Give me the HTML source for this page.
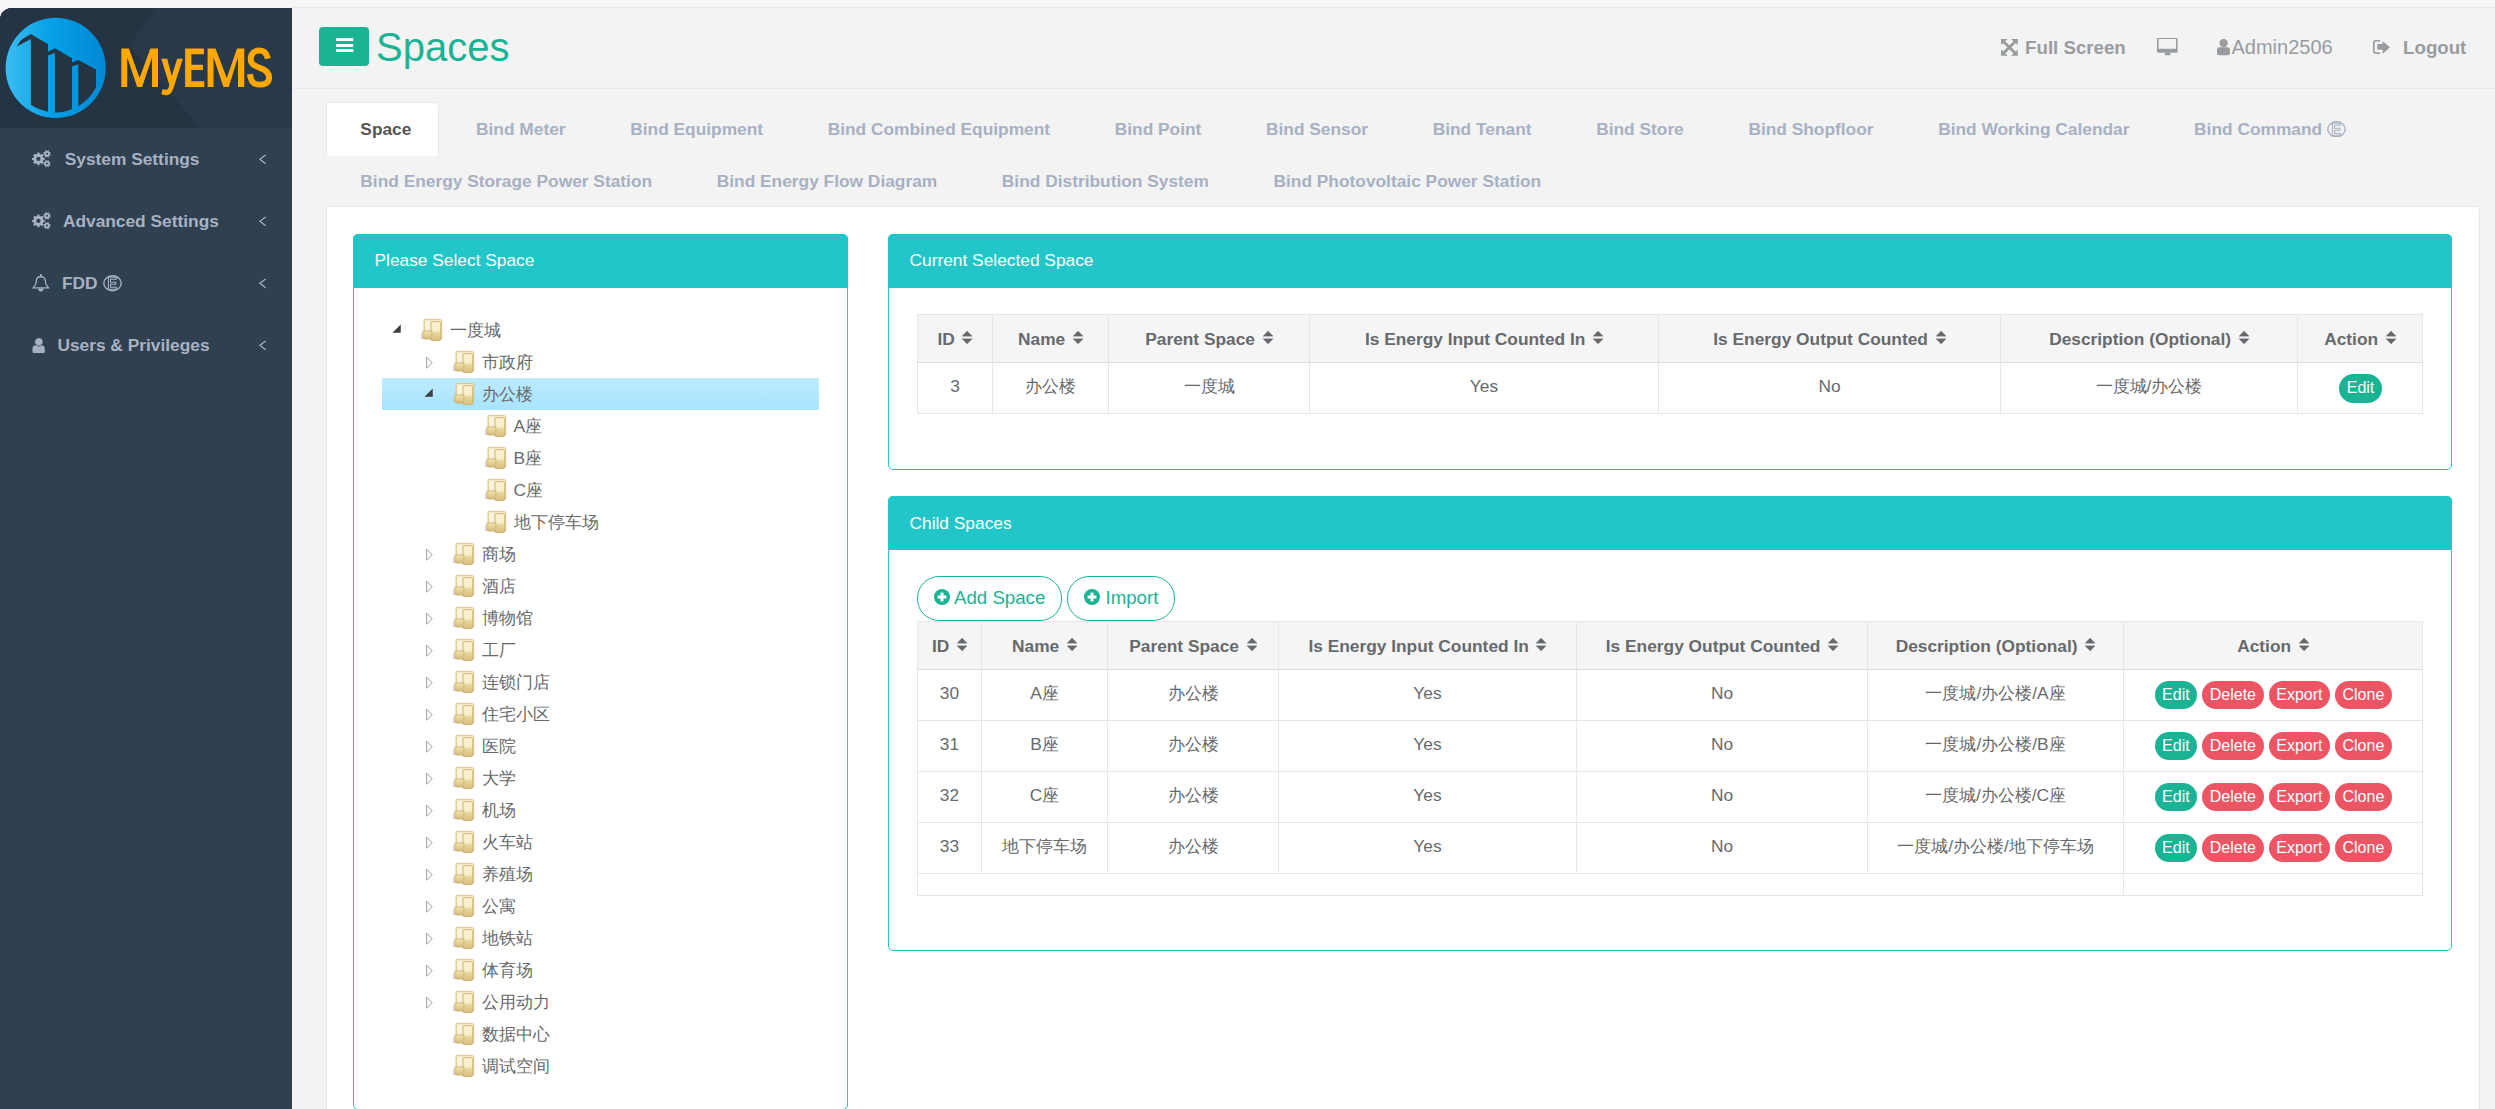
<!DOCTYPE html><html><head><meta charset="utf-8"><title>Spaces</title><style>
*{box-sizing:border-box;margin:0;padding:0}
html,body{width:2495px;height:1109px;overflow:hidden}
body{background:#f6f6f6;font-family:"Liberation Sans",sans-serif;font-size:17.33px;color:#676a6c;position:relative}
.abs{position:absolute}
.txt{position:absolute;white-space:nowrap;line-height:1}
#sidebar{position:absolute;left:0;top:8px;width:292px;height:1101px;background:#2f4050;border-top-left-radius:12px;overflow:hidden}
#navhead{position:absolute;left:0;top:0;width:292px;height:120px;background:#243443;overflow:hidden}
.menu{position:absolute;left:0;width:292px;color:#a7b1c2;font-weight:bold;font-size:17.33px}
#header{position:absolute;left:292px;top:7px;width:2203px;height:82px;background:#f3f3f4;border-top:1px solid #e7e7e8;border-bottom:1px solid #e7eaec}
#page{position:absolute;left:292px;top:89px;width:2203px;height:1020px;background:#f3f3f4}
.tabs{position:absolute;left:326px;top:102px;width:2152px;display:flex;flex-wrap:wrap}
.tab{display:block;border:1px solid transparent;padding:0 26.67px 0 33.33px;margin-right:2.67px;margin-bottom:-2px;height:54px;line-height:53px;font-weight:bold;color:#a7b1c2;white-space:nowrap;font-size:17.33px}
.tab.active{background:#fff;border-color:#e7eaec;border-bottom-color:#fff;border-radius:4px 4px 0 0;color:#555}
#content{position:absolute;left:326px;top:206px;width:2154px;height:910px;background:#fff;border:1px solid #e7eaec;border-radius:0 3px 0 0}
.panel{position:absolute;border:1px solid #23c6c8;border-radius:5px;background:#fff}
.phead{position:absolute;left:-1px;top:-1px;right:-1px;background:#23c6c8;color:#fff;border-radius:5px 5px 0 0}
table.t{position:absolute;border-collapse:collapse;table-layout:fixed;font-size:17.33px;color:#676a6c}
table.t th,table.t td{border:1px solid #e7e7e7;text-align:center;vertical-align:top;white-space:nowrap;line-height:24.76px;padding:10.67px 0 0 0}
table.t th{background:#f5f5f6;font-weight:bold;padding-top:12.4px;border-bottom-color:#dcdcdc}
.sort{display:inline-block;width:10.2px;height:12.9px;margin-left:7.6px;vertical-align:1.1px}
.btn{display:inline-block;color:#fff;font-size:16px;height:28px;line-height:28px;border-radius:14px;text-align:center;vertical-align:top}
.bg{background:#1ab394}.br{background:#ed5565}
.obtn{position:absolute;border:1px solid #1ab394;color:#1ab394;border-radius:22px;font-size:18.67px;height:44.5px;line-height:42px;white-space:nowrap;background:#fff}
.node{position:absolute;height:32px;line-height:32px;white-space:nowrap}
</style></head><body>
<div id="sidebar">
<div id="navhead">
<svg class="abs" style="left:0;top:0" width="292" height="120"><rect width="292" height="120" fill="#243443"/><polygon points="155,0 292,0 292,120 200,120 130,37" fill="#283949"/><polygon points="0,0 60,0 30,120 0,120" fill="#253646" opacity="0.6"/></svg>
<svg class="abs" style="left:0;top:-8px" width="120" height="130" viewBox="0 0 120 130">
<defs><linearGradient id="lg" x1="0" y1="0" x2="1" y2="0"><stop offset="0" stop-color="#3bbdf1"/><stop offset="0.45" stop-color="#06a0e6"/><stop offset="1" stop-color="#0288d4"/></linearGradient>
<clipPath id="cc"><circle cx="55.7" cy="67.9" r="44.5"/></clipPath></defs>
<circle cx="55.7" cy="67.9" r="50.1" fill="url(#lg)"/>
<g clip-path="url(#cc)" fill="#243443">
<polygon points="30.9,39.1 15.8,47 20.2,40.2 30.9,34.1 48,44.2 48,125 30.9,125"/>
<polygon points="48,51.8 54.9,48.2 72,58.3 72,125 54.9,125 54.9,52.8 48,55.6"/>
<polygon points="72,62.5 78.3,60 96,69.4 96,125 78.3,125 78.3,64.4 72,66.3"/>
</g></svg>
<svg class="abs" style="left:115px;top:32px" width="165" height="60" viewBox="0 0 2495 907"><g fill="#ffa800">
<polygon points="95,130 210,130 372,575 535,130 650,130 650,710 560,710 560,260 410,710 335,710 185,260 185,710 95,710"/>
<path d="M700 285 L790 285 L858 548 L940 285 L1025 285 L880 740 Q840 835 775 835 Q735 835 700 815 L720 742 Q750 755 775 752 Q805 748 822 680 Z"/>
<polygon points="1060,130 1345,130 1345,215 1155,215 1155,375 1330,375 1330,455 1155,455 1155,625 1350,625 1350,710 1060,710"/>
<polygon points="1400,130 1520,130 1690,575 1845,130 1955,130 1955,710 1860,710 1860,260 1720,710 1640,710 1490,260 1490,710 1400,710"/>
</g><path d="M2312 282 C2292 190 2245 160 2185 160 C2110 160 2052 200 2052 290 C2055 370 2120 395 2190 420 C2270 445 2330 480 2330 570 C2330 650 2260 675 2185 675 C2100 675 2052 630 2040 515" fill="none" stroke="#ffa800" stroke-width="90"/></svg>
</div>
<div class="txt" style="left:64.7px;top:143.2px;color:#a7b1c2;font-weight:bold;font-size:17.33px">System Settings</div>
<svg class="abs" style="left:32px;top:142px" width="20" height="18" viewBox="0 0 20 18"><path d="M11.24 7.66 L12.72 7.90 L12.72 9.90 L11.24 10.14 L10.70 11.45 L11.58 12.66 L10.16 14.08 L8.95 13.20 L7.64 13.74 L7.40 15.22 L5.40 15.22 L5.16 13.74 L3.85 13.20 L2.64 14.08 L1.22 12.66 L2.10 11.45 L1.56 10.14 L0.08 9.90 L0.08 7.90 L1.56 7.66 L2.10 6.35 L1.22 5.14 L2.64 3.72 L3.85 4.60 L5.16 4.06 L5.40 2.58 L7.40 2.58 L7.64 4.06 L8.95 4.60 L10.16 3.72 L11.58 5.14 L10.70 6.35ZM8.55 8.90A2.15 2.15 0 1 0 4.25 8.90A2.15 2.15 0 1 0 8.55 8.90ZM17.86 4.30 L18.78 4.82 L18.36 5.84 L17.35 5.55 L16.70 6.20 L16.99 7.21 L15.97 7.63 L15.45 6.71 L14.55 6.71 L14.03 7.63 L13.01 7.21 L13.30 6.20 L12.65 5.55 L11.64 5.84 L11.22 4.82 L12.14 4.30 L12.14 3.40 L11.22 2.88 L11.64 1.86 L12.65 2.15 L13.30 1.50 L13.01 0.49 L14.03 0.07 L14.55 0.99 L15.45 0.99 L15.97 0.07 L16.99 0.49 L16.70 1.50 L17.35 2.15 L18.36 1.86 L18.78 2.88 L17.86 3.40ZM16.00 3.85A1.0 1.0 0 1 0 14.00 3.85A1.0 1.0 0 1 0 16.00 3.85ZM17.77 14.04 L18.58 14.52 L18.18 15.48 L17.27 15.25 L16.65 15.87 L16.88 16.78 L15.92 17.18 L15.44 16.37 L14.56 16.37 L14.08 17.18 L13.12 16.78 L13.35 15.87 L12.73 15.25 L11.82 15.48 L11.42 14.52 L12.23 14.04 L12.23 13.16 L11.42 12.68 L11.82 11.72 L12.73 11.95 L13.35 11.33 L13.12 10.42 L14.08 10.02 L14.56 10.83 L15.44 10.83 L15.92 10.02 L16.88 10.42 L16.65 11.33 L17.27 11.95 L18.18 11.72 L18.58 12.68 L17.77 13.16ZM16.00 13.60A1.0 1.0 0 1 0 14.00 13.60A1.0 1.0 0 1 0 16.00 13.60Z" fill="#a7b1c2" fill-rule="evenodd"/></svg>
<svg class="abs" style="left:258px;top:145px" width="9" height="13" viewBox="0 0 9 13"><path d="M7.6 2 L1.9 6.35 L7.6 10.7" stroke="#a7b1c2" stroke-width="1.25" fill="none"/></svg>
<div class="txt" style="left:62.9px;top:205.2px;color:#a7b1c2;font-weight:bold;font-size:17.33px">Advanced Settings</div>
<svg class="abs" style="left:32px;top:204px" width="20" height="18" viewBox="0 0 20 18"><path d="M11.24 7.66 L12.72 7.90 L12.72 9.90 L11.24 10.14 L10.70 11.45 L11.58 12.66 L10.16 14.08 L8.95 13.20 L7.64 13.74 L7.40 15.22 L5.40 15.22 L5.16 13.74 L3.85 13.20 L2.64 14.08 L1.22 12.66 L2.10 11.45 L1.56 10.14 L0.08 9.90 L0.08 7.90 L1.56 7.66 L2.10 6.35 L1.22 5.14 L2.64 3.72 L3.85 4.60 L5.16 4.06 L5.40 2.58 L7.40 2.58 L7.64 4.06 L8.95 4.60 L10.16 3.72 L11.58 5.14 L10.70 6.35ZM8.55 8.90A2.15 2.15 0 1 0 4.25 8.90A2.15 2.15 0 1 0 8.55 8.90ZM17.86 4.30 L18.78 4.82 L18.36 5.84 L17.35 5.55 L16.70 6.20 L16.99 7.21 L15.97 7.63 L15.45 6.71 L14.55 6.71 L14.03 7.63 L13.01 7.21 L13.30 6.20 L12.65 5.55 L11.64 5.84 L11.22 4.82 L12.14 4.30 L12.14 3.40 L11.22 2.88 L11.64 1.86 L12.65 2.15 L13.30 1.50 L13.01 0.49 L14.03 0.07 L14.55 0.99 L15.45 0.99 L15.97 0.07 L16.99 0.49 L16.70 1.50 L17.35 2.15 L18.36 1.86 L18.78 2.88 L17.86 3.40ZM16.00 3.85A1.0 1.0 0 1 0 14.00 3.85A1.0 1.0 0 1 0 16.00 3.85ZM17.77 14.04 L18.58 14.52 L18.18 15.48 L17.27 15.25 L16.65 15.87 L16.88 16.78 L15.92 17.18 L15.44 16.37 L14.56 16.37 L14.08 17.18 L13.12 16.78 L13.35 15.87 L12.73 15.25 L11.82 15.48 L11.42 14.52 L12.23 14.04 L12.23 13.16 L11.42 12.68 L11.82 11.72 L12.73 11.95 L13.35 11.33 L13.12 10.42 L14.08 10.02 L14.56 10.83 L15.44 10.83 L15.92 10.02 L16.88 10.42 L16.65 11.33 L17.27 11.95 L18.18 11.72 L18.58 12.68 L17.77 13.16ZM16.00 13.60A1.0 1.0 0 1 0 14.00 13.60A1.0 1.0 0 1 0 16.00 13.60Z" fill="#a7b1c2" fill-rule="evenodd"/></svg>
<svg class="abs" style="left:258px;top:207px" width="9" height="13" viewBox="0 0 9 13"><path d="M7.6 2 L1.9 6.35 L7.6 10.7" stroke="#a7b1c2" stroke-width="1.25" fill="none"/></svg>
<div class="txt" style="left:61.9px;top:267.2px;color:#a7b1c2;font-weight:bold;font-size:17.33px">FDD</div>
<svg class="abs" style="left:102.6px;top:267px" width="19" height="16.5" viewBox="0 0 19 16.5"><g fill="none" stroke="#a7b1c2"><ellipse cx="9.5" cy="8.25" rx="8.7" ry="7.5" stroke-width="1.45"/><path d="M5.4 2.3H13.3V4.2H7.5V7.3H12.8V9.2H7.5V12.3H13.3V14.2H5.4Z" stroke-width="1.1"/></g></svg>
<svg class="abs" style="left:32px;top:265px" width="18" height="20" viewBox="0 0 18 20"><g stroke="#a7b1c2" fill="none" stroke-width="1.3"><path d="M1.25 14.95L2.1 13.7C3.5 11.9 4.4 10.3 4.4 8V7.5C4.4 5.1 6.3 3.75 8.85 3.75S13.3 5.1 13.3 7.5V8C13.3 10.3 14.2 11.9 15.6 13.7L16.45 14.95Z"/><path d="M8.85 1.1V3.7" stroke-width="1.9"/></g><path d="M6.2 15.5A2.65 2.9 0 0 0 11.5 15.5Z" fill="#a7b1c2"/></svg>
<svg class="abs" style="left:258px;top:269px" width="9" height="13" viewBox="0 0 9 13"><path d="M7.6 2 L1.9 6.35 L7.6 10.7" stroke="#a7b1c2" stroke-width="1.25" fill="none"/></svg>
<div class="txt" style="left:57.4px;top:329.2px;color:#a7b1c2;font-weight:bold;font-size:17.33px">Users &amp; Privileges</div>
<svg class="abs" style="left:31.5px;top:329px" width="14" height="17" viewBox="0 0 14 17"><path d="M3.9 8.3H9.2A3.6 3.6 0 0 1 12.8 11.9V14.8A1.2 1.2 0 0 1 11.6 16H1.7A1.2 1.2 0 0 1 .5 14.8V11.9A3.6 3.6 0 0 1 3.9 8.3Z" fill="#a7b1c2"/><circle cx="6.85" cy="4.9" r="4.15" fill="#a7b1c2" stroke="#2f4050" stroke-width="0.7"/></svg>
<svg class="abs" style="left:258px;top:331px" width="9" height="13" viewBox="0 0 9 13"><path d="M7.6 2 L1.9 6.35 L7.6 10.7" stroke="#a7b1c2" stroke-width="1.25" fill="none"/></svg>
</div>
<div id="header"></div>
<div id="page"></div>
<div class="abs" style="left:319px;top:27px;width:50px;height:39px;background:#1ab394;border-radius:4px"></div>
<svg class="abs" style="left:335.5px;top:38px" width="18" height="16" viewBox="0 0 18 16"><rect x="0" y="0.1" width="17.3" height="2.9" fill="#fff"/><rect x="0" y="6" width="17.3" height="2.9" fill="#fff"/><rect x="0" y="11.1" width="17.3" height="2.9" fill="#fff"/></svg>
<div class="txt" style="left:376px;top:26.8px;font-size:40px;color:#1ab394">Spaces</div>
<svg class="abs" style="left:2001px;top:38.9px" width="17" height="17" viewBox="0 0 17 17"><g fill="#999c9e"><path d="M2.2 2.2L14.55 14.55M14.55 2.2L2.2 14.55" stroke="#999c9e" stroke-width="2.9"/><polygon points="0,0 6.7,0 0,6.1"/><polygon points="16.75,0 10,0 16.75,6.1"/><polygon points="0,16.7 6.7,16.7 0,10.6"/><polygon points="16.75,16.7 10,16.7 16.75,10.6"/></g></svg>
<div class="txt" style="left:2025.1px;top:39.0px;font-size:18.67px;font-weight:bold;color:#999c9e">Full Screen</div>
<svg class="abs" style="left:2157.2px;top:37.95px" width="21" height="18" viewBox="0 0 21 18"><g fill="#999c9e"><path d="M1.2 0H19.4A1.2 1.2 0 0 1 20.6 1.2V13.55A1.2 1.2 0 0 1 19.4 14.75H1.2A1.2 1.2 0 0 1 0 13.55V1.2A1.2 1.2 0 0 1 1.2 0ZM1.6 1.1V10.65H19V1.1Z" fill-rule="evenodd"/><rect x="7.8" y="14.5" width="5.6" height="2.65" rx="0.5"/></g></svg>
<svg class="abs" style="left:2217px;top:38.9px" width="13" height="17" viewBox="0 0 13 17"><circle cx="6.6" cy="4.1" r="4.2" fill="#999c9e"/><path d="M2.6 8.35H10.4A2.6 2.6 0 0 1 13 10.95V14.2A2 2 0 0 1 11 16.2H2A2 2 0 0 1 0 14.2V10.95A2.6 2.6 0 0 1 2.6 8.35Z" fill="#999c9e"/></svg>
<div class="txt" style="left:2231.5px;top:37.0px;font-size:20px;color:#999c9e">Admin2506</div>
<svg class="abs" style="left:2372.7px;top:40px" width="18" height="15" viewBox="0 0 18 15"><path d="M7.1 0.8H3.2C1.8 0.8 0.8 1.8 0.8 3.2V10.7C0.8 12.1 1.8 13.1 3.2 13.1H7.1" fill="none" stroke="#999c9e" stroke-width="1.6"/><polygon points="4.3,4.1 9.6,4.1 9.6,0.9 16.9,7.3 9.6,13.9 9.6,9.7 4.3,9.7" fill="#999c9e"/></svg>
<div class="txt" style="left:2403.1px;top:38.9px;font-size:18.67px;font-weight:bold;color:#999c9e">Logout</div>
<div class="tabs">
<div class="tab active">Space</div>
<div class="tab">Bind Meter</div>
<div class="tab">Bind Equipment</div>
<div class="tab">Bind Combined Equipment</div>
<div class="tab">Bind Point</div>
<div class="tab">Bind Sensor</div>
<div class="tab">Bind Tenant</div>
<div class="tab">Bind Store</div>
<div class="tab">Bind Shopfloor</div>
<div class="tab">Bind Working Calendar</div>
<div class="tab">Bind Command <span style='display:inline-block;width:17px'></span></div>
<div class="tab">Bind Energy Storage Power Station</div>
<div class="tab">Bind Energy Flow Diagram</div>
<div class="tab">Bind Distribution System</div>
<div class="tab">Bind Photovoltaic Power Station</div>
</div>
<svg class="abs" style="left:2326.5px;top:120.5px" width="19" height="16.5" viewBox="0 0 19 16.5"><g fill="none" stroke="#a7b1c2"><ellipse cx="9.5" cy="8.25" rx="8.7" ry="7.5" stroke-width="1.45"/><path d="M5.4 2.3H13.3V4.2H7.5V7.3H12.8V9.2H7.5V12.3H13.3V14.2H5.4Z" stroke-width="1.1"/></g></svg>
<div id="content"></div>
<div class="panel" style="left:353px;top:234px;width:495px;height:876px">
<div class="phead" style="height:54px"><div class="txt" style="left:21.5px;top:18.3px;font-size:17.33px">Please Select Space</div></div>
</div>
<div class="abs" style="left:382px;top:378px;width:437px;height:32px;background:linear-gradient(#beebff,#a8e4ff)"></div>
<svg width="0" height="0" style="position:absolute"><defs>
<linearGradient id="fgb" x1="0" y1="0" x2="0" y2="1"><stop offset="0" stop-color="#f4e9c4"/><stop offset="1" stop-color="#e2cf94"/></linearGradient>
<linearGradient id="fgf" x1="0" y1="0" x2="0" y2="1"><stop offset="0" stop-color="#fdf6d6"/><stop offset="0.5" stop-color="#f6ebc2"/><stop offset="0.62" stop-color="#e6d398"/><stop offset="1" stop-color="#dcc27f"/></linearGradient>
<linearGradient id="fgt" x1="0" y1="0" x2="0" y2="1"><stop offset="0" stop-color="#f0e2ad"/><stop offset="1" stop-color="#d6bf7f"/></linearGradient>
<symbol id="folder" viewBox="0 0 32 32">
<rect x="6.5" y="18.5" width="3" height="6.5" rx="1.5" fill="#c8ccd6" opacity="0.5"/>
<path d="M11.2 5.4h15.3c.7 0 1.2.5 1.2 1.2V24.8H10.1V6.5c0-.6.5-1.1 1.1-1.1z" fill="url(#fgb)" stroke="#d3bf85" stroke-width="0.9"/>
<rect x="11.3" y="7" width="5" height="10" fill="#fcf3d6"/>
<path d="M17.6 7.8h8.4c.4 0 .7.3.7.7v17.3c0 .4-.3.7-.7.7h-8.4c-.4 0-.6-.3-.6-.7V8.5c0-.4.2-.7.6-.7z" fill="url(#fgf)" stroke="#ccb473" stroke-width="0.9"/>
<path d="M9.6 17h7.7c.3 0 .6.3.6.6v7.2H9.6c-.4 0-.7-.3-.7-.7v-6.4c0-.4.3-.7.7-.7z" fill="url(#fgt)" stroke="#c9b06f" stroke-width="0.9"/>
</symbol></defs></svg>
<svg class="abs" style="left:382px;top:314px" width="32" height="32" viewBox="0 0 32 32"><polygon points="18.75,10.4 18.75,18.75 10.4,18.75" fill="#404040"/></svg>
<svg class="abs" style="left:414px;top:314px" width="32" height="32"><use href="#folder"/></svg>
<div class="txt" style="left:449.5px;top:322.3px;font-size:17.33px;color:#676a6c">一度城</div>
<svg class="abs" style="left:414px;top:346px" width="32" height="32" viewBox="0 0 32 32"><polygon points="12.6,11.3 18.3,16.75 12.6,22.2" fill="#fff" stroke="#9d9d9d" stroke-width="1"/></svg>
<svg class="abs" style="left:446px;top:346px" width="32" height="32"><use href="#folder"/></svg>
<div class="txt" style="left:481.5px;top:354.3px;font-size:17.33px;color:#676a6c">市政府</div>
<svg class="abs" style="left:414px;top:378px" width="32" height="32" viewBox="0 0 32 32"><polygon points="18.75,10.4 18.75,18.75 10.4,18.75" fill="#404040"/></svg>
<svg class="abs" style="left:446px;top:378px" width="32" height="32"><use href="#folder"/></svg>
<div class="txt" style="left:481.5px;top:386.3px;font-size:17.33px;color:#676a6c">办公楼</div>
<svg class="abs" style="left:478px;top:410px" width="32" height="32"><use href="#folder"/></svg>
<div class="txt" style="left:513.5px;top:418.3px;font-size:17.33px;color:#676a6c">A座</div>
<svg class="abs" style="left:478px;top:442px" width="32" height="32"><use href="#folder"/></svg>
<div class="txt" style="left:513.5px;top:450.3px;font-size:17.33px;color:#676a6c">B座</div>
<svg class="abs" style="left:478px;top:474px" width="32" height="32"><use href="#folder"/></svg>
<div class="txt" style="left:513.5px;top:482.3px;font-size:17.33px;color:#676a6c">C座</div>
<svg class="abs" style="left:478px;top:506px" width="32" height="32"><use href="#folder"/></svg>
<div class="txt" style="left:513.5px;top:514.3px;font-size:17.33px;color:#676a6c">地下停车场</div>
<svg class="abs" style="left:414px;top:538px" width="32" height="32" viewBox="0 0 32 32"><polygon points="12.6,11.3 18.3,16.75 12.6,22.2" fill="#fff" stroke="#9d9d9d" stroke-width="1"/></svg>
<svg class="abs" style="left:446px;top:538px" width="32" height="32"><use href="#folder"/></svg>
<div class="txt" style="left:481.5px;top:546.3px;font-size:17.33px;color:#676a6c">商场</div>
<svg class="abs" style="left:414px;top:570px" width="32" height="32" viewBox="0 0 32 32"><polygon points="12.6,11.3 18.3,16.75 12.6,22.2" fill="#fff" stroke="#9d9d9d" stroke-width="1"/></svg>
<svg class="abs" style="left:446px;top:570px" width="32" height="32"><use href="#folder"/></svg>
<div class="txt" style="left:481.5px;top:578.3px;font-size:17.33px;color:#676a6c">酒店</div>
<svg class="abs" style="left:414px;top:602px" width="32" height="32" viewBox="0 0 32 32"><polygon points="12.6,11.3 18.3,16.75 12.6,22.2" fill="#fff" stroke="#9d9d9d" stroke-width="1"/></svg>
<svg class="abs" style="left:446px;top:602px" width="32" height="32"><use href="#folder"/></svg>
<div class="txt" style="left:481.5px;top:610.3px;font-size:17.33px;color:#676a6c">博物馆</div>
<svg class="abs" style="left:414px;top:634px" width="32" height="32" viewBox="0 0 32 32"><polygon points="12.6,11.3 18.3,16.75 12.6,22.2" fill="#fff" stroke="#9d9d9d" stroke-width="1"/></svg>
<svg class="abs" style="left:446px;top:634px" width="32" height="32"><use href="#folder"/></svg>
<div class="txt" style="left:481.5px;top:642.3px;font-size:17.33px;color:#676a6c">工厂</div>
<svg class="abs" style="left:414px;top:666px" width="32" height="32" viewBox="0 0 32 32"><polygon points="12.6,11.3 18.3,16.75 12.6,22.2" fill="#fff" stroke="#9d9d9d" stroke-width="1"/></svg>
<svg class="abs" style="left:446px;top:666px" width="32" height="32"><use href="#folder"/></svg>
<div class="txt" style="left:481.5px;top:674.3px;font-size:17.33px;color:#676a6c">连锁门店</div>
<svg class="abs" style="left:414px;top:698px" width="32" height="32" viewBox="0 0 32 32"><polygon points="12.6,11.3 18.3,16.75 12.6,22.2" fill="#fff" stroke="#9d9d9d" stroke-width="1"/></svg>
<svg class="abs" style="left:446px;top:698px" width="32" height="32"><use href="#folder"/></svg>
<div class="txt" style="left:481.5px;top:706.3px;font-size:17.33px;color:#676a6c">住宅小区</div>
<svg class="abs" style="left:414px;top:730px" width="32" height="32" viewBox="0 0 32 32"><polygon points="12.6,11.3 18.3,16.75 12.6,22.2" fill="#fff" stroke="#9d9d9d" stroke-width="1"/></svg>
<svg class="abs" style="left:446px;top:730px" width="32" height="32"><use href="#folder"/></svg>
<div class="txt" style="left:481.5px;top:738.3px;font-size:17.33px;color:#676a6c">医院</div>
<svg class="abs" style="left:414px;top:762px" width="32" height="32" viewBox="0 0 32 32"><polygon points="12.6,11.3 18.3,16.75 12.6,22.2" fill="#fff" stroke="#9d9d9d" stroke-width="1"/></svg>
<svg class="abs" style="left:446px;top:762px" width="32" height="32"><use href="#folder"/></svg>
<div class="txt" style="left:481.5px;top:770.3px;font-size:17.33px;color:#676a6c">大学</div>
<svg class="abs" style="left:414px;top:794px" width="32" height="32" viewBox="0 0 32 32"><polygon points="12.6,11.3 18.3,16.75 12.6,22.2" fill="#fff" stroke="#9d9d9d" stroke-width="1"/></svg>
<svg class="abs" style="left:446px;top:794px" width="32" height="32"><use href="#folder"/></svg>
<div class="txt" style="left:481.5px;top:802.3px;font-size:17.33px;color:#676a6c">机场</div>
<svg class="abs" style="left:414px;top:826px" width="32" height="32" viewBox="0 0 32 32"><polygon points="12.6,11.3 18.3,16.75 12.6,22.2" fill="#fff" stroke="#9d9d9d" stroke-width="1"/></svg>
<svg class="abs" style="left:446px;top:826px" width="32" height="32"><use href="#folder"/></svg>
<div class="txt" style="left:481.5px;top:834.3px;font-size:17.33px;color:#676a6c">火车站</div>
<svg class="abs" style="left:414px;top:858px" width="32" height="32" viewBox="0 0 32 32"><polygon points="12.6,11.3 18.3,16.75 12.6,22.2" fill="#fff" stroke="#9d9d9d" stroke-width="1"/></svg>
<svg class="abs" style="left:446px;top:858px" width="32" height="32"><use href="#folder"/></svg>
<div class="txt" style="left:481.5px;top:866.3px;font-size:17.33px;color:#676a6c">养殖场</div>
<svg class="abs" style="left:414px;top:890px" width="32" height="32" viewBox="0 0 32 32"><polygon points="12.6,11.3 18.3,16.75 12.6,22.2" fill="#fff" stroke="#9d9d9d" stroke-width="1"/></svg>
<svg class="abs" style="left:446px;top:890px" width="32" height="32"><use href="#folder"/></svg>
<div class="txt" style="left:481.5px;top:898.3px;font-size:17.33px;color:#676a6c">公寓</div>
<svg class="abs" style="left:414px;top:922px" width="32" height="32" viewBox="0 0 32 32"><polygon points="12.6,11.3 18.3,16.75 12.6,22.2" fill="#fff" stroke="#9d9d9d" stroke-width="1"/></svg>
<svg class="abs" style="left:446px;top:922px" width="32" height="32"><use href="#folder"/></svg>
<div class="txt" style="left:481.5px;top:930.3px;font-size:17.33px;color:#676a6c">地铁站</div>
<svg class="abs" style="left:414px;top:954px" width="32" height="32" viewBox="0 0 32 32"><polygon points="12.6,11.3 18.3,16.75 12.6,22.2" fill="#fff" stroke="#9d9d9d" stroke-width="1"/></svg>
<svg class="abs" style="left:446px;top:954px" width="32" height="32"><use href="#folder"/></svg>
<div class="txt" style="left:481.5px;top:962.3px;font-size:17.33px;color:#676a6c">体育场</div>
<svg class="abs" style="left:414px;top:986px" width="32" height="32" viewBox="0 0 32 32"><polygon points="12.6,11.3 18.3,16.75 12.6,22.2" fill="#fff" stroke="#9d9d9d" stroke-width="1"/></svg>
<svg class="abs" style="left:446px;top:986px" width="32" height="32"><use href="#folder"/></svg>
<div class="txt" style="left:481.5px;top:994.3px;font-size:17.33px;color:#676a6c">公用动力</div>
<svg class="abs" style="left:446px;top:1018px" width="32" height="32"><use href="#folder"/></svg>
<div class="txt" style="left:481.5px;top:1026.3px;font-size:17.33px;color:#676a6c">数据中心</div>
<svg class="abs" style="left:446px;top:1050px" width="32" height="32"><use href="#folder"/></svg>
<div class="txt" style="left:481.5px;top:1058.3px;font-size:17.33px;color:#676a6c">调试空间</div>
<div class="panel" style="left:888px;top:234px;width:1564px;height:236px">
<div class="phead" style="height:54px"><div class="txt" style="left:21.5px;top:18.3px;font-size:17.33px">Current Selected Space</div></div>
</div>
<table class="t" style="left:917px;top:314px;width:1506px"><colgroup><col style="width:75px"><col style="width:116px"><col style="width:201px"><col style="width:349px"><col style="width:342px"><col style="width:297px"><col style="width:125px"></colgroup><thead><tr style="height:48px"><th>ID<svg class="sort" viewBox="0 0 10.2 12.9"><polygon points="5.1,0 10.2,5.2 0,5.2" fill="#676a6c" stroke="#676a6c" stroke-width="0.3" stroke-linejoin="round"/><polygon points="0,7.8 10.2,7.8 5.1,12.9" fill="#676a6c" stroke="#676a6c" stroke-width="0.3" stroke-linejoin="round"/></svg></th><th>Name<svg class="sort" viewBox="0 0 10.2 12.9"><polygon points="5.1,0 10.2,5.2 0,5.2" fill="#676a6c" stroke="#676a6c" stroke-width="0.3" stroke-linejoin="round"/><polygon points="0,7.8 10.2,7.8 5.1,12.9" fill="#676a6c" stroke="#676a6c" stroke-width="0.3" stroke-linejoin="round"/></svg></th><th>Parent Space<svg class="sort" viewBox="0 0 10.2 12.9"><polygon points="5.1,0 10.2,5.2 0,5.2" fill="#676a6c" stroke="#676a6c" stroke-width="0.3" stroke-linejoin="round"/><polygon points="0,7.8 10.2,7.8 5.1,12.9" fill="#676a6c" stroke="#676a6c" stroke-width="0.3" stroke-linejoin="round"/></svg></th><th>Is Energy Input Counted In<svg class="sort" viewBox="0 0 10.2 12.9"><polygon points="5.1,0 10.2,5.2 0,5.2" fill="#676a6c" stroke="#676a6c" stroke-width="0.3" stroke-linejoin="round"/><polygon points="0,7.8 10.2,7.8 5.1,12.9" fill="#676a6c" stroke="#676a6c" stroke-width="0.3" stroke-linejoin="round"/></svg></th><th>Is Energy Output Counted<svg class="sort" viewBox="0 0 10.2 12.9"><polygon points="5.1,0 10.2,5.2 0,5.2" fill="#676a6c" stroke="#676a6c" stroke-width="0.3" stroke-linejoin="round"/><polygon points="0,7.8 10.2,7.8 5.1,12.9" fill="#676a6c" stroke="#676a6c" stroke-width="0.3" stroke-linejoin="round"/></svg></th><th>Description (Optional)<svg class="sort" viewBox="0 0 10.2 12.9"><polygon points="5.1,0 10.2,5.2 0,5.2" fill="#676a6c" stroke="#676a6c" stroke-width="0.3" stroke-linejoin="round"/><polygon points="0,7.8 10.2,7.8 5.1,12.9" fill="#676a6c" stroke="#676a6c" stroke-width="0.3" stroke-linejoin="round"/></svg></th><th>Action<svg class="sort" viewBox="0 0 10.2 12.9"><polygon points="5.1,0 10.2,5.2 0,5.2" fill="#676a6c" stroke="#676a6c" stroke-width="0.3" stroke-linejoin="round"/><polygon points="0,7.8 10.2,7.8 5.1,12.9" fill="#676a6c" stroke="#676a6c" stroke-width="0.3" stroke-linejoin="round"/></svg></th></tr></thead><tbody><tr style="height:51px"><td>3</td><td>办公楼</td><td>一度城</td><td>Yes</td><td>No</td><td>一度城/办公楼</td><td style="padding-top:11px"><span class="btn bg" style="width:43.2px;height:29px;line-height:27px;border-radius:15px;margin-left:1px">Edit</span></td></tr></tbody></table>
<div class="panel" style="left:888px;top:496px;width:1564px;height:455px">
<div class="phead" style="height:54px"><div class="txt" style="left:21.5px;top:19.3px;font-size:17.33px">Child Spaces</div></div>
</div>
<div class="obtn" style="left:917px;top:576px;width:144.5px"><svg style="position:absolute;left:15.8px;top:11.9px" width="16" height="16" viewBox="0 0 16 16"><circle cx="8" cy="8" r="8" fill="#1ab394"/><rect x="3.6" y="6.5" width="8.8" height="3" fill="#fff"/><rect x="6.5" y="3.6" width="3" height="8.8" fill="#fff"/></svg><span style="position:absolute;left:36px;top:0.3px">Add Space</span></div>
<div class="obtn" style="left:1067px;top:576px;width:107.7px"><svg style="position:absolute;left:15.8px;top:11.9px" width="16" height="16" viewBox="0 0 16 16"><circle cx="8" cy="8" r="8" fill="#1ab394"/><rect x="3.6" y="6.5" width="8.8" height="3" fill="#fff"/><rect x="6.5" y="3.6" width="3" height="8.8" fill="#fff"/></svg><span style="position:absolute;left:37.5px;top:0.3px">Import</span></div>
<table class="t" style="left:917px;top:621px;width:1506px"><colgroup><col style="width:64px"><col style="width:126px"><col style="width:171px"><col style="width:298px"><col style="width:291px"><col style="width:256px"><col style="width:299px"></colgroup><thead><tr style="height:48px"><th>ID<svg class="sort" viewBox="0 0 10.2 12.9"><polygon points="5.1,0 10.2,5.2 0,5.2" fill="#676a6c" stroke="#676a6c" stroke-width="0.3" stroke-linejoin="round"/><polygon points="0,7.8 10.2,7.8 5.1,12.9" fill="#676a6c" stroke="#676a6c" stroke-width="0.3" stroke-linejoin="round"/></svg></th><th>Name<svg class="sort" viewBox="0 0 10.2 12.9"><polygon points="5.1,0 10.2,5.2 0,5.2" fill="#676a6c" stroke="#676a6c" stroke-width="0.3" stroke-linejoin="round"/><polygon points="0,7.8 10.2,7.8 5.1,12.9" fill="#676a6c" stroke="#676a6c" stroke-width="0.3" stroke-linejoin="round"/></svg></th><th>Parent Space<svg class="sort" viewBox="0 0 10.2 12.9"><polygon points="5.1,0 10.2,5.2 0,5.2" fill="#676a6c" stroke="#676a6c" stroke-width="0.3" stroke-linejoin="round"/><polygon points="0,7.8 10.2,7.8 5.1,12.9" fill="#676a6c" stroke="#676a6c" stroke-width="0.3" stroke-linejoin="round"/></svg></th><th>Is Energy Input Counted In<svg class="sort" viewBox="0 0 10.2 12.9"><polygon points="5.1,0 10.2,5.2 0,5.2" fill="#676a6c" stroke="#676a6c" stroke-width="0.3" stroke-linejoin="round"/><polygon points="0,7.8 10.2,7.8 5.1,12.9" fill="#676a6c" stroke="#676a6c" stroke-width="0.3" stroke-linejoin="round"/></svg></th><th>Is Energy Output Counted<svg class="sort" viewBox="0 0 10.2 12.9"><polygon points="5.1,0 10.2,5.2 0,5.2" fill="#676a6c" stroke="#676a6c" stroke-width="0.3" stroke-linejoin="round"/><polygon points="0,7.8 10.2,7.8 5.1,12.9" fill="#676a6c" stroke="#676a6c" stroke-width="0.3" stroke-linejoin="round"/></svg></th><th>Description (Optional)<svg class="sort" viewBox="0 0 10.2 12.9"><polygon points="5.1,0 10.2,5.2 0,5.2" fill="#676a6c" stroke="#676a6c" stroke-width="0.3" stroke-linejoin="round"/><polygon points="0,7.8 10.2,7.8 5.1,12.9" fill="#676a6c" stroke="#676a6c" stroke-width="0.3" stroke-linejoin="round"/></svg></th><th>Action<svg class="sort" viewBox="0 0 10.2 12.9"><polygon points="5.1,0 10.2,5.2 0,5.2" fill="#676a6c" stroke="#676a6c" stroke-width="0.3" stroke-linejoin="round"/><polygon points="0,7.8 10.2,7.8 5.1,12.9" fill="#676a6c" stroke="#676a6c" stroke-width="0.3" stroke-linejoin="round"/></svg></th></tr></thead><tbody><tr style="height:51px"><td>30</td><td>A座</td><td>办公楼</td><td>Yes</td><td>No</td><td>一度城/办公楼/A座</td><td style="padding-top:11px"><div style="display:flex;gap:5.1px;justify-content:center;padding-left:1px"><span class="btn bg" style="width:41.7px">Edit</span><span class="btn br" style="width:62px">Delete</span><span class="btn br" style="width:60.8px">Export</span><span class="btn br" style="width:57.1px">Clone</span></div></td></tr><tr style="height:51px"><td>31</td><td>B座</td><td>办公楼</td><td>Yes</td><td>No</td><td>一度城/办公楼/B座</td><td style="padding-top:11px"><div style="display:flex;gap:5.1px;justify-content:center;padding-left:1px"><span class="btn bg" style="width:41.7px">Edit</span><span class="btn br" style="width:62px">Delete</span><span class="btn br" style="width:60.8px">Export</span><span class="btn br" style="width:57.1px">Clone</span></div></td></tr><tr style="height:51px"><td>32</td><td>C座</td><td>办公楼</td><td>Yes</td><td>No</td><td>一度城/办公楼/C座</td><td style="padding-top:11px"><div style="display:flex;gap:5.1px;justify-content:center;padding-left:1px"><span class="btn bg" style="width:41.7px">Edit</span><span class="btn br" style="width:62px">Delete</span><span class="btn br" style="width:60.8px">Export</span><span class="btn br" style="width:57.1px">Clone</span></div></td></tr><tr style="height:51px"><td>33</td><td>地下停车场</td><td>办公楼</td><td>Yes</td><td>No</td><td>一度城/办公楼/地下停车场</td><td style="padding-top:11px"><div style="display:flex;gap:5.1px;justify-content:center;padding-left:1px"><span class="btn bg" style="width:41.7px">Edit</span><span class="btn br" style="width:62px">Delete</span><span class="btn br" style="width:60.8px">Export</span><span class="btn br" style="width:57.1px">Clone</span></div></td></tr></tbody><tfoot><tr style="height:22px"><td colspan="6" style="padding:0"></td><td style="padding:0"></td></tr></tfoot></table>
</body></html>
